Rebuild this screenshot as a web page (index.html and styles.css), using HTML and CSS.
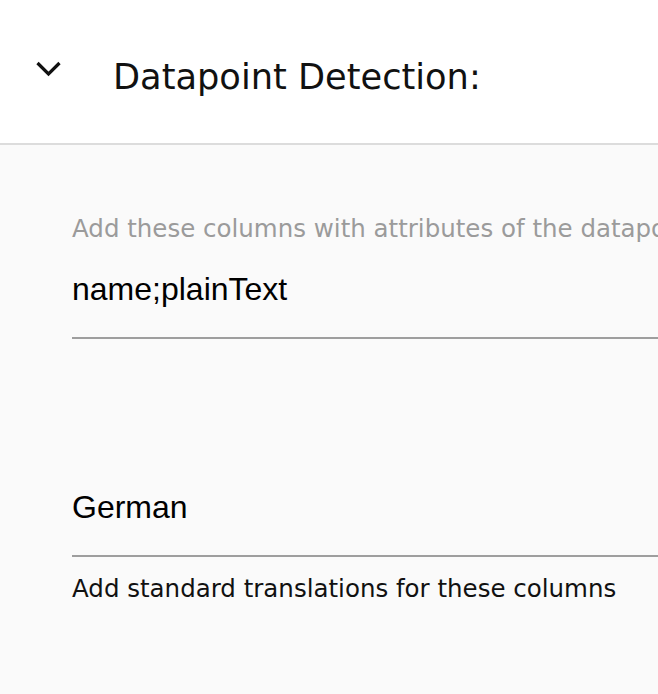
FILE: index.html
```html
<!DOCTYPE html>
<html>
<head>
<meta charset="utf-8">
<link rel="stylesheet" href="styles.css">
</head>
<body>
<div class="page">
  <header class="panel-header">
    <svg class="chevron" width="26" height="16" viewBox="0 0 26 16" aria-hidden="true">
      <polyline points="1.5,2 12.5,13 23.5,2" fill="none" stroke="#111" stroke-width="3.2" stroke-linecap="butt" stroke-linejoin="miter"/>
    </svg>
    <h2 class="panel-title">Datapoint Detection:</h2>
  </header>
  <section class="panel-body">
    <div class="field field-first">
      <div class="field-label">Add these columns with attributes of the datapoint to the table</div>
      <div class="field-input">name;plainText</div>
    </div>
    <div class="field field-second">
      <div class="field-input">German</div>
      <div class="field-helper">Add standard translations for these columns</div>
    </div>
  </section>
</div>
</body>
</html>
```
FILE: styles.css
```css
html, body {
  margin: 0;
  padding: 0;
  background: #fafafa;
  overflow: hidden;
}
.page {
  width: 658px;
  height: 694px;
  overflow: hidden;
  white-space: nowrap;
}
.panel-header {
  display: flex;
  align-items: flex-start;
  box-sizing: border-box;
  height: 145px;
  padding-top: 55px;
  background: #ffffff;
  border-bottom: 2px solid #dcdcdc;
}
.chevron {
  display: block;
  margin-left: 36px;
  margin-top: 6px;
  flex: none;
}
.panel-title {
  margin: 0 0 0 51px;
  font-family: "DejaVu Sans", sans-serif;
  font-weight: normal;
  font-size: 35.2px;
  line-height: 44px;
  color: #111;
}
.panel-body {
  padding: 68px 0 0 72px;
}
.field-label {
  font-family: "DejaVu Sans", sans-serif;
  font-size: 24.5px;
  line-height: 32px;
  color: #9b9b9b;
}
.field-input {
  font-family: "Liberation Sans", Arial, sans-serif;
  font-size: 32px;
  line-height: 40px;
  color: #000;
  padding-bottom: 28px;
  border-bottom: 2px solid #9e9e9e;
  width: 700px;
}
.field-first .field-input {
  margin-top: 24px;
}
.field-second {
  margin-top: 148px;
}
.field-helper {
  margin-top: 16px;
  font-family: "DejaVu Sans", sans-serif;
  font-size: 24.5px;
  line-height: 32px;
  color: #111;
}
```
